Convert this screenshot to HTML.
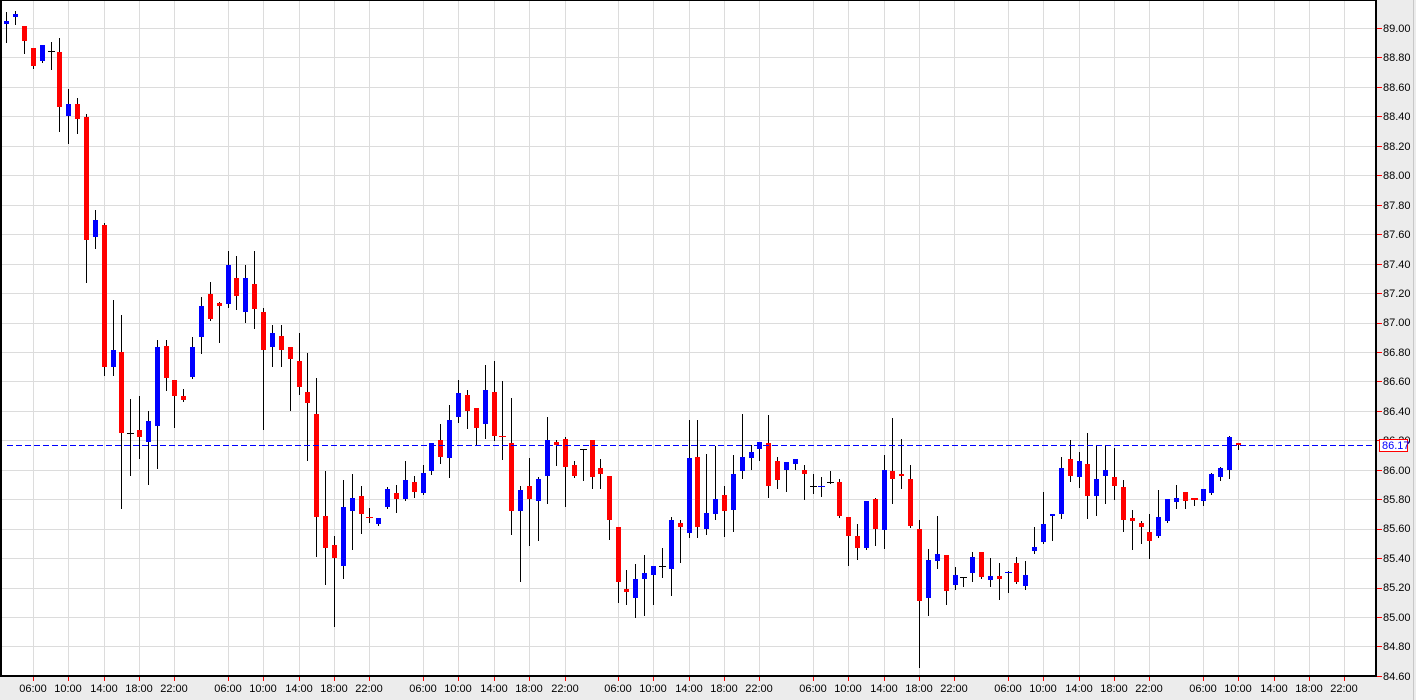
<!DOCTYPE html>
<html><head><meta charset="utf-8"><style>
html,body{margin:0;padding:0;background:#ececec;width:1416px;height:700px;overflow:hidden}
svg{display:block}
text{font-family:"Liberation Sans",sans-serif;font-size:11px;fill:#000}
</style></head><body>
<svg id="s" width="1416" height="700" xmlns="http://www.w3.org/2000/svg">
<rect x="0" y="0" width="1416" height="700" fill="#ececec"/>
<line x1="1413.5" y1="0" x2="1413.5" y2="700" stroke="#c8c8c8"/>
<rect x="0" y="0" width="1377" height="677" fill="#fff"/>
<g id="grid" stroke="#dcdcdc" stroke-width="1"></g>
<g id="ticks" stroke="#ff0000" stroke-width="1"></g>
<g id="candles"></g>
<line x1="7" y1="445.5" x2="1377" y2="445.5" stroke="#0000ff" stroke-dasharray="6,3"/>
<path d="M0.5 0V677M1376.5 0V677M0 0.5H1377M0 676.5H1377" stroke="#000" stroke-width="1" fill="none"/>
<path d="M1.5 0V677M0 675.5H1377M1375.5 0V677" stroke="#000" stroke-width="1" fill="none"/>
<g>
<text x="1383" y="32">89.00</text>
<text x="1383" y="61">88.80</text>
<text x="1383" y="91">88.60</text>
<text x="1383" y="120">88.40</text>
<text x="1383" y="150">88.20</text>
<text x="1383" y="179">88.00</text>
<text x="1383" y="209">87.80</text>
<text x="1383" y="238">87.60</text>
<text x="1383" y="268">87.40</text>
<text x="1383" y="297">87.20</text>
<text x="1383" y="326">87.00</text>
<text x="1383" y="356">86.80</text>
<text x="1383" y="385">86.60</text>
<text x="1383" y="415">86.40</text>
<text x="1383" y="444">86.20</text>
<text x="1383" y="474">86.00</text>
<text x="1383" y="503">85.80</text>
<text x="1383" y="532">85.60</text>
<text x="1383" y="562">85.40</text>
<text x="1383" y="591">85.20</text>
<text x="1383" y="621">85.00</text>
<text x="1383" y="650">84.80</text>
<text x="1383" y="680">84.60</text>
</g>
<rect x="1379.5" y="439.5" width="28" height="12" fill="#fff" stroke="#ff0000"/>
<text x="1382" y="449" style="fill:#0000ff">86.17</text>
<g id="tl" text-anchor="middle">
<text x="33" y="692">06:00</text><text x="68" y="692">10:00</text><text x="104" y="692">14:00</text><text x="139" y="692">18:00</text><text x="174" y="692">22:00</text>
<text x="228" y="692">06:00</text><text x="263" y="692">10:00</text><text x="299" y="692">14:00</text><text x="334" y="692">18:00</text><text x="369" y="692">22:00</text>
<text x="423" y="692">06:00</text><text x="458" y="692">10:00</text><text x="494" y="692">14:00</text><text x="529" y="692">18:00</text><text x="565" y="692">22:00</text>
<text x="618" y="692">06:00</text><text x="653" y="692">10:00</text><text x="689" y="692">14:00</text><text x="724" y="692">18:00</text><text x="759" y="692">22:00</text>
<text x="813" y="692">06:00</text><text x="848" y="692">10:00</text><text x="884" y="692">14:00</text><text x="919" y="692">18:00</text><text x="954" y="692">22:00</text>
<text x="1008" y="692">06:00</text><text x="1043" y="692">10:00</text><text x="1079" y="692">14:00</text><text x="1114" y="692">18:00</text><text x="1149" y="692">22:00</text>
<text x="1203" y="692">06:00</text><text x="1238" y="692">10:00</text><text x="1274" y="692">14:00</text><text x="1309" y="692">18:00</text><text x="1344" y="692">22:00</text>
</g>
</svg>
<script>
var NS="http://www.w3.org/2000/svg";
function el(p,t,a){var e=document.createElementNS(NS,t);for(var k in a)e.setAttribute(k,a[k]);p.appendChild(e);return e;}
var g=document.getElementById("grid"),tk=document.getElementById("ticks"),cg=document.getElementById("candles");
var vx=[33,68,104,139,174,228,263,299,334,369,423,458,494,529,565,618,653,689,724,759,813,848,884,919,954,1008,1043,1079,1114,1149,1203,1238,1274,1309,1344];
vx.forEach(function(x){el(g,"line",{x1:x+.5,y1:0,x2:x+.5,y2:676});el(tk,"line",{x1:x+.5,y1:677,x2:x+.5,y2:681});});
for(var k=0;k<23;k++){var y=Math.round(28+29.45*k)+.5;el(g,"line",{x1:0,y1:y,x2:1376,y2:y});el(tk,"line",{x1:1377,y1:y,x2:1382,y2:y});}
var C=[[6,21,24,12,42,"b"],[15,14,17,11,24,"b"],[24,26,41,26,53,"r"],[33,48,66,48,68,"r"],[42,45,61,45,62,"b"],[51,51,51,42,69,"k"],[59,52,107,38,131,"r"],[68,104,116,89,143,"b"],[77,104,119,98,133,"r"],[86,117,240,114,282,"r"],[95,220,237,210,248,"b"],[104,225,367,223,375,"r"],[113,350,367,300,375,"b"],[121,352,433,315,508,"r"],[130,433,433,399,475,"k"],[139,430,437,396,458,"r"],[148,421,442,411,484,"b"],[157,347,426,340,468,"b"],[166,346,378,340,390,"r"],[174,380,396,380,427,"r"],[183,396,400,389,401,"r"],[192,347,377,337,378,"b"],[201,306,337,297,353,"b"],[210,294,319,282,320,"r"],[219,303,306,302,342,"r"],[228,265,304,251,307,"b"],[236,278,296,256,309,"r"],[245,278,312,265,322,"b"],[254,284,309,251,328,"r"],[263,312,350,308,429,"r"],[272,333,347,325,366,"b"],[281,336,350,325,366,"r"],[290,347,359,347,410,"r"],[299,361,387,333,394,"r"],[307,392,403,353,460,"r"],[316,414,517,378,556,"r"],[325,516,548,471,584,"r"],[334,545,558,536,626,"r"],[343,507,566,480,578,"b"],[352,498,511,474,549,"b"],[361,496,514,486,533,"r"],[369,517,517,508,522,"r"],[378,518,524,518,525,"b"],[387,489,507,487,508,"b"],[396,493,499,485,512,"r"],[405,480,499,461,500,"b"],[414,482,492,476,497,"r"],[423,473,493,465,494,"b"],[431,443,471,443,474,"b"],[440,440,457,424,463,"r"],[449,420,458,405,477,"b"],[458,393,417,380,422,"b"],[467,395,411,390,428,"r"],[476,408,428,408,444,"r"],[485,390,424,365,438,"b"],[494,392,436,361,440,"r"],[502,436,436,381,459,"r"],[511,443,511,398,534,"r"],[520,490,511,486,581,"b"],[529,486,499,458,545,"r"],[538,479,501,477,540,"b"],[547,440,476,417,503,"b"],[556,442,445,440,465,"r"],[565,439,467,437,506,"r"],[574,465,476,461,477,"r"],[583,449,449,449,480,"k"],[592,440,477,440,488,"r"],[600,468,474,459,488,"r"],[609,476,520,476,539,"r"],[618,527,582,527,602,"r"],[626,589,592,570,604,"r"],[635,579,598,564,617,"b"],[644,573,579,555,615,"b"],[653,566,575,566,604,"b"],[662,566,566,548,577,"k"],[671,520,569,517,595,"b"],[680,523,527,520,562,"r"],[689,458,533,420,537,"b"],[697,457,527,420,537,"r"],[706,513,529,454,534,"b"],[715,499,514,446,519,"b"],[724,495,511,486,536,"r"],[733,474,510,455,531,"b"],[742,457,471,414,478,"b"],[751,452,458,445,469,"b"],[759,442,449,442,460,"b"],[768,443,486,415,497,"r"],[777,461,480,457,488,"r"],[786,462,470,462,491,"b"],[795,459,464,459,469,"b"],[804,470,474,465,499,"r"],[813,486,486,474,493,"k"],[821,486,486,477,496,"b"],[830,482,482,471,483,"k"],[839,482,516,479,517,"r"],[848,517,536,517,565,"r"],[857,536,548,524,559,"r"],[866,501,548,501,549,"b"],[875,499,529,498,545,"r"],[884,470,530,455,548,"b"],[892,471,479,418,503,"r"],[901,474,476,439,488,"r"],[910,479,526,465,527,"r"],[919,529,601,520,667,"r"],[928,560,598,549,615,"b"],[937,554,561,516,568,"b"],[946,555,591,555,604,"r"],[955,575,585,567,589,"b"],[963,577,577,577,586,"k"],[972,557,573,552,581,"b"],[981,552,577,552,578,"r"],[990,576,580,558,586,"b"],[999,576,579,563,599,"r"],[1008,572,572,571,592,"b"],[1016,563,582,557,583,"r"],[1025,575,586,561,589,"b"],[1034,547,551,527,553,"b"],[1043,524,542,492,543,"b"],[1052,514,516,514,540,"b"],[1061,468,514,457,518,"b"],[1070,459,476,440,481,"r"],[1079,461,477,452,487,"b"],[1087,464,496,433,518,"r"],[1096,479,496,445,515,"b"],[1105,470,476,445,503,"b"],[1114,477,486,448,499,"r"],[1123,487,520,480,531,"r"],[1132,518,521,510,549,"r"],[1141,523,527,521,543,"r"],[1149,532,541,514,558,"r"],[1158,517,536,490,537,"b"],[1167,499,521,499,522,"b"],[1176,498,502,485,508,"b"],[1185,492,501,492,508,"r"],[1194,498,499,498,505,"r"],[1203,489,501,489,505,"b"],[1211,474,493,473,494,"b"],[1220,468,477,467,480,"b"],[1229,437,470,436,478,"b"],[1238,443,445,443,449,"r"]];
var col={b:"#0000ff",r:"#ff0000",k:"#000000"};
C.forEach(function(c){var x=c[0],t=c[1],b=c[2],h=c[3],l=c[4];
el(cg,"line",{x1:x+.5,y1:h,x2:x+.5,y2:l+1,stroke:"#000","stroke-width":1});
if(b-t<2){el(cg,"rect",{x:x-3,y:t,width:7,height:Math.max(1,b-t+1),fill:col[c[5]]});}
else el(cg,"rect",{x:x-2,y:t,width:5,height:b-t,fill:col[c[5]]});});
</script>
</body></html>
